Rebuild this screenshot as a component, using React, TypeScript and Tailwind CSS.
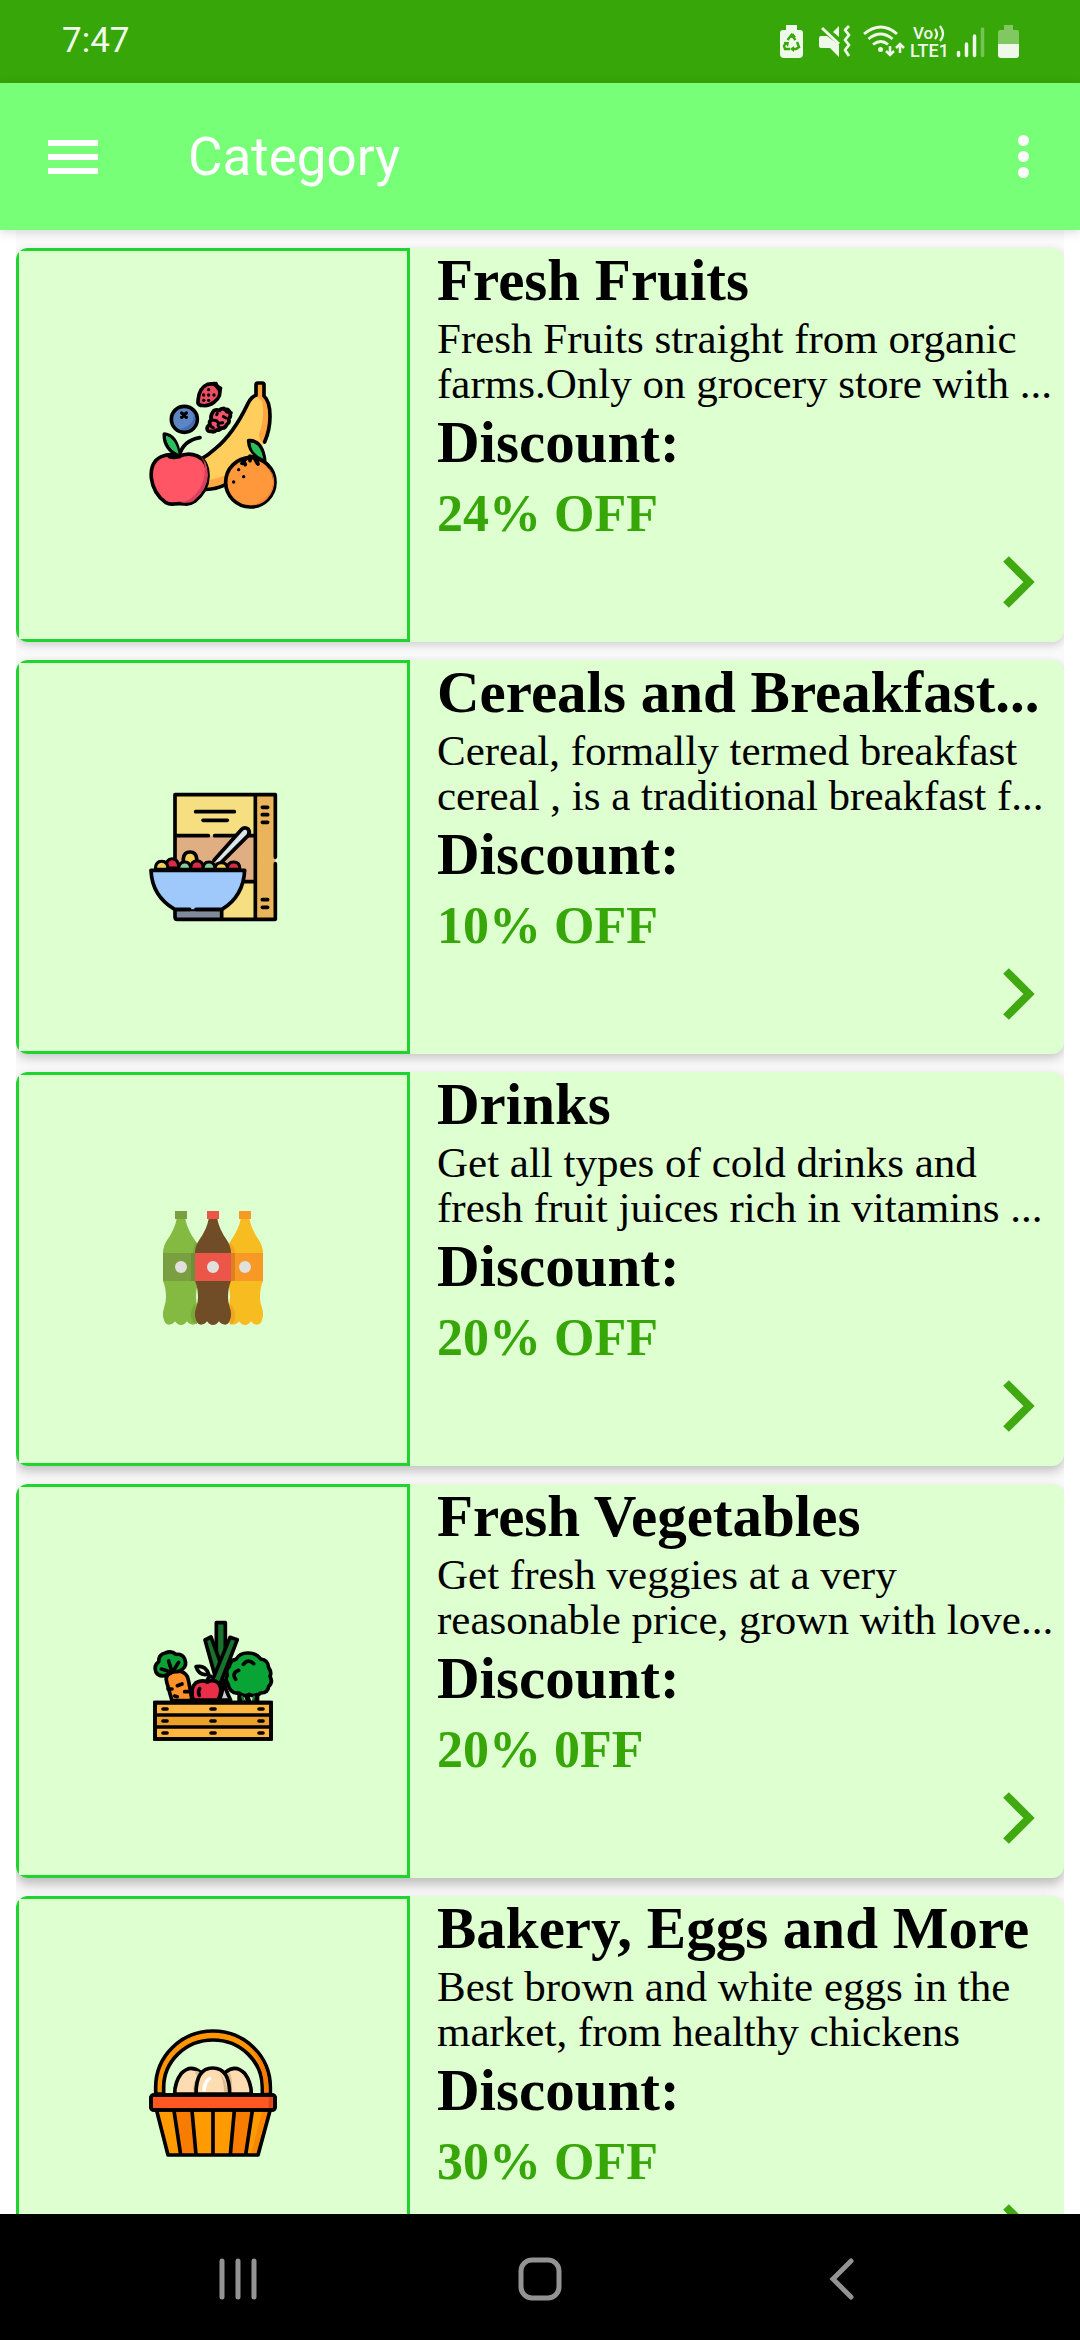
import React from "react";

const INK = "#000";

function FruitsIcon() {
  return (
    <svg viewBox="54 60 390 390" className="h-[130px] w-[130px]" fill="none" stroke={INK} strokeWidth="11" strokeLinecap="round" strokeLinejoin="round" aria-hidden="true">
      <path d="M378 71q0-2 4-2h16q4 0 4 3v34q16 12 20 50 2 48-18 92L300 380q-34 6-74 8L200 312Q262 268 304 214 328 182 354 130 362 112 378 106z" fill="#ffce5c" stroke="none" />
      <path d="M378 71h24v35q20 14 20 64-2 42-18 78-26-10-12-40 12-40 4-84-8-12-18-14z" fill="#ff9838" stroke="none" opacity=".75" />
      <path d="M404 246q16-36 16-78 0-44-18-60V74q0-5-5-5h-14q-5 0-5 5v32q-14 4-24 24-44 92-98 136-20 18-40 30M228 388q30 0 58-14" />
      <path d="M226 382q30 0 56-14v-20l-54 16z" fill="#ff9838" stroke="none" opacity=".7" />
      <path d="M148 290q-24-12-54 0-34 16-30 64 6 48 44 74 10 6 24 4 16-2 32 0 16 2 30-8 38-30 40-74 0-48-32-62-28-12-56 2-14 4-28 0z" fill="#ff5565" />
      <path d="M208 286q20 14 16 56-6 46-42 74-12 8-32 10 22 6 40-2 42-34 44-78-2-46-26-60z" fill="#d6425d" stroke="none" />
      <path d="M148 288q10-46 62-55M148 288q-46-20-45-66 38 4 45 66z" />
      <path d="M146 282q-38-20-38-54 30 8 38 54z" fill="#27c05c" stroke="none" />
      <circle cx="361" cy="367" r="74" fill="#ff983b" />
      <path d="M414 320q36 56-12 98-22 16-44 18 44 2 62-30 28-46-6-86z" fill="#ff8136" stroke="none" />
      <path d="M336 310q14-20 28-20 14 2 20 22M360 288v14M340 300l6 14M372 292l10 18M404 300q-46-16-48-58 40-2 48 58z" />
      <path d="M400 296q-38-16-38-48 30 4 38 48z" fill="#27c05c" stroke="none" />
      <g fill={INK} stroke="none"><circle cx="326" cy="329" r="5" /><circle cx="341" cy="350" r="5" /><circle cx="311" cy="366" r="5" /></g>
      <circle cx="163" cy="178" r="39" fill="#5c85c4" />
      <path d="M190 156q8 40-42 52 44 10 48-34z" fill="#426cad" stroke="none" />
      <path d="M155 159l14 13M169 159l-14 13" strokeWidth="10" />
      <path d="M232 73q28-6 36 14 8 22-16 40-18 14-40 9-10-2-8-14 2-38 28-49z" fill="#ed4d62" />
      <path d="M252 70l16 20M258 70l2 10 12 4-2 8" strokeWidth="10" />
      <g fill={INK} stroke="none"><circle cx="236" cy="89" r="5" /><circle cx="221" cy="105" r="5" /><circle cx="236" cy="105" r="5" /><circle cx="252" cy="105" r="5" /><circle cx="221" cy="121" r="5" /><circle cx="236" cy="121" r="5" /></g>
      <path d="M248 157q6-10 20-6 8-8 16-3 14-2 16 12 4 10-4 16 4 12-6 18-4 12-16 10-4 8-14 6-10 8-16 4-12 2-13-8 1-10 9-12-4-10 4-14-4-12 4-23z" fill="#f2526a" />
      <path d="M282 144l8 12 14 2M246 180l14 2 6 8 12-2M262 160l-2 4M280 170l8 4M242 198l8 6M264 196l4 8" strokeWidth="9" />
    </svg>
  );
}

function CerealIcon() {
  return (
    <svg viewBox="54 66 390 390" className="h-[130px] w-[130px]" fill="none" stroke={INK} strokeWidth="11" strokeLinecap="round" strokeLinejoin="round" aria-hidden="true">
      <g stroke="none">
        <path d="M135 74h241v374H135z" fill="#f5df80" />
        <path d="M135 197h241v138H135z" fill="#e0ae83" />
        <path d="M376 74h60v374h-60z" fill="#eab55a" />
      </g>
      <path d="M436 262V74H135v196M436 281v167H275M376 76v370M138 197h97M254 197h118M345 335h30" />
      <path d="M197 125h116M219 151h73M397 112h16M397 134h16M397 157h16M397 389h16M397 412h16" />
      <path d="M252 271l82-92q10-10 20-2 8 10 0 20l-86 86" fill="#dce5ea" stroke={INK} />
      <path d="M160 266q2-20 20-20t20 20v28h-40z" fill="#f3cf5a" />
      <g strokeWidth="9">
        <path d="M108 294q0-28 18-28 20 0 20 28z" fill="#d92c43" />
        <path d="M76 298q0-24 19-24t19 24z" fill="#f3cf5a" />
        <path d="M182 298q0-26 19-26t19 26z" fill="#d92c43" />
        <path d="M146 298q0-22 18-22t18 22z" fill="#86cf97" />
        <path d="M255 298q0-20 19-20t19 20z" fill="#f3cf5a" />
        <path d="M219 298q0-22 18-22t18 22z" fill="#86cf97" />
        <path d="M292 298q0-22 19-22t19 22z" fill="#d92c43" />
      </g>
      <path d="M135 418h140v30H142q-7 0-7-8z" fill="#7f8b9b" />
      <path d="M63 300h281q-4 80-68 118H134Q70 384 63 300z" fill="#9fc8fb" stroke="none" />
      <path d="M179 418h-45Q66 378 63 301h281q-4 78-68 117h-78" />
    </svg>
  );
}

const BOTTLE_TOP = "M140 87h26q6 32 28 62 13 19 13 40H99q0-21 13-40 22-30 28-62z";
const BOTTLE_BOTTOM = "M99 272h108q-9 22-9 50 0 16 5 28 8 24 1 40-4 14-15 14-11 0-18-10-7 11-18 11t-18-11q-7 10-18 10-11 0-15-14-7-16 1-40 5-12 5-28 0-28-9-50z";

function DrinksIcon() {
  const bottle = (x: number, body: string, label: string) => (
    <g transform={`translate(${x} 0)`}>
      <path d={BOTTLE_TOP} fill={body} />
      <path d={BOTTLE_BOTTOM} fill={body} />
      <path d="M135 63h36v24h-36zM99 189h108v84H99z" fill={label} />
      <circle cx="153" cy="231" r="18" fill="#e2e0dd" />
    </g>
  );
  return (
    <svg viewBox="54 42 390 390" className="h-[130px] w-[130px]" aria-hidden="true">
      {bottle(0, "#84ba41", "#7a9f40")}
      {bottle(192, "#f7bd20", "#f79924")}
      <path d="M183 189h14v84h-14z" fill="#6e8f39" />
      <path d="M301 189h14v84h-14z" fill="#dd8021" />
      <path d="M197 154q-8 20-8 35h12v-28zM183 370q4-20 12-28l6 60q-20-4-18-32z" fill="#76a83c" />
      <path d="M301 158q14 14 14 31h-14zM301 342q16 14 14 40-2 20-14 22z" fill="#f1a522" />
      {bottle(96, "#714d27", "#ec5649")}
    </svg>
  );
}

function VegetablesIcon() {
  return (
    <svg viewBox="54 48 390 390" className="h-[130px] w-[130px]" fill="none" stroke={INK} strokeWidth="11" strokeLinecap="round" strokeLinejoin="round" aria-hidden="true">
      <path d="M282 240q0 24-14 60h34q-18-34-20-60z" fill="#c9cbd3" />
      <path d="M259 68h27v120h-27z" fill="#19732f" />
      <path d="M225 120l18-9 34 92-20 32z" fill="#19732f" />
      <path d="M300 112l22 7-62 160-12-40z" fill="#19732f" />
      <path d="M294 252q-10-12-2-26-6-16 6-26 2-20 20-22 12-20 36-19 24-1 38 18 22 2 24 26 10 14 4 26 10 18-4 30-2 20-24 20-16 14-34 4-16 10-30-4-28 4-34-27z" fill="#08a536" />
      <path d="M340 193q14-18 31-2M326 211q-22 8-9 27" />
      <path d="M330 286v20M380 286v20M352 292l4 14" strokeWidth="16" />
      <path d="M336 290l8 16M372 290l-4 16" stroke="#19732f" strokeWidth="7" />
      <path d="M126 302l-16-56q-6-20 14-28 34-14 48 12 4 8 14 72z" fill="#ff9228" />
      <path d="M114 267h12M142 257l14-5M142 290l-8-2M164 275h10" />
      <path d="M110 225q-22 8-32-8-8-20 8-32 0-22 20-26 18-8 32 4 20-2 26 14 8 20-6 30-14 14-32 4-6 10-16 14z" fill="#0ba136" />
      <path d="M94 207q18 4 28 12M116 183l8 26M146 187l-14 22" />
      <path d="M190 300q-12-34 8-52 18-10 34-2 20-10 34 4 14 22-2 50z" fill="#ea2d48" />
      <path d="M209 266q-6 8-1 20M231 245q2-14 12-16M198 200q28-6 38 22-28 8-38-22z" />
      <path d="M75 308h348v109H75z" fill="#ffb540" />
      <path d="M80 350h338v28H80z" fill="#eba02b" stroke="none" />
      <path d="M78 345h342M78 381h342M99 327h12M243 327h12M387 327h12M99 363h12M243 363h12M387 363h12M99 399h12M243 399h12M387 399h12" />
      <path d="M75 308h348v109H75z" strokeLinejoin="miter" />
    </svg>
  );
}

function EggsIcon() {
  return (
    <svg viewBox="54 54 390 390" className="h-[130px] w-[130px]" fill="none" stroke={INK} strokeWidth="11" strokeLinecap="round" strokeLinejoin="round" aria-hidden="true">
      <path d="M77 252v-20a172 169 0 0 1 344 0v20h-24v-20a148 142 0 0 0-296 0v20z" fill="#ff9500" />
      <path d="M380 130q36 44 36 118h-14q2-80-38-132z" fill="#f57c00" stroke="none" />
      <path d="M134 252q0-36 20-62 28-28 56-4 20 24 20 66z" fill="#fddcb2" />
      <path d="M270 252q0-42 18-66 28-24 56 4 20 26 20 62z" fill="#fddcb2" />
      <path d="M196 190q8 8 0 20-8 16-6 38 14-36 22-60-8-6-16-6zM300 188q8 20 6 60-10-40-18-54z" fill="#deb98e" stroke="none" />
      <path d="M198 252q0-78 50-78 51 0 51 78z" fill="#fddcb2" />
      <path d="M268 188q22 20 24 58h-10q0-34-14-58z" fill="#deb98e" stroke="none" />
      <path d="M222 240q2-22 16-34" stroke="#fff" />
      <path d="M80 300l34 135h270l36-135z" fill="#ff9b00" stroke="none" />
      <path d="M132 300h54l13 135h-47zM315 300h54l-23 135h-46z" fill="#f77c00" stroke="none" />
      <path d="M398 300h22l-36 135h-22z" fill="#f57c00" stroke="none" opacity=".6" />
      <path d="M80 302l34 133h270l36-133M132 302l20 132M186 302l12 132M249 302v132M313 302l-12 132M367 302l-20 132" />
      <rect x="63" y="255" width="372" height="45" rx="8" fill="#ff5722" />
      <path d="M416 262h12v32h-12z" fill="#dc461a" stroke="none" />
      <rect x="63" y="255" width="372" height="45" rx="8" />
    </svg>
  );
}

type Category = {
  title: string;
  lines: [string, string];
  discount: string;
  icon: React.ReactNode;
  shadow: string;
};

const CATEGORIES: Category[] = [
  {
    title: "Fresh Fruits",
    lines: ["Fresh Fruits straight from organic", "farms.Only on grocery store with ..."],
    discount: "24% OFF",
    icon: <FruitsIcon />,
    shadow: "shadow-[0_3px_10px_rgba(0,0,0,0.18)]",
  },
  {
    title: "Cereals and Breakfast...",
    lines: ["Cereal, formally termed breakfast", "cereal , is a traditional breakfast f..."],
    discount: "10% OFF",
    icon: <CerealIcon />,
    shadow: "shadow-[0_4px_11px_rgba(0,0,0,0.21)]",
  },
  {
    title: "Drinks",
    lines: ["Get all types of cold drinks and", "fresh fruit juices rich in vitamins ..."],
    discount: "20% OFF",
    icon: <DrinksIcon />,
    shadow: "shadow-[0_5px_12px_rgba(0,0,0,0.24)]",
  },
  {
    title: "Fresh Vegetables",
    lines: ["Get fresh veggies at a very", "reasonable price, grown with love..."],
    discount: "20% 0FF",
    icon: <VegetablesIcon />,
    shadow: "shadow-[0_6px_12px_rgba(0,0,0,0.26)]",
  },
  {
    title: "Bakery, Eggs and More",
    lines: ["Best brown and white eggs in the", "market, from healthy chickens"],
    discount: "30% OFF",
    icon: <EggsIcon />,
    shadow: "shadow-[0_6px_12px_rgba(0,0,0,0.26)]",
  },
];

function CategoryCard({ item }: { item: Category }) {
  return (
    <li className={`flex shrink-0 overflow-hidden rounded-xl bg-[#deffd0] ${item.shadow}`}>
      <div className="flex aspect-square w-[394px] shrink-0 items-center justify-center border-[3px] border-[#1fd42f]">
        {item.icon}
      </div>
      <div className="flex min-w-0 flex-1 flex-col whitespace-nowrap pl-[27px] text-black">
        <h2 className="text-[59px] leading-[64px] font-bold">{item.title}</h2>
        <p className="mt-1 text-[43px] leading-[45px]">
          {item.lines[0]}
          <br />
          {item.lines[1]}
        </p>
        <p className="mt-1 text-[59px] leading-[64px] font-bold">Discount:</p>
        <p className="mt-2 text-[52px] leading-[64px] font-bold text-[#37a608]">{item.discount}</p>
        <button type="button" aria-label={`Open ${item.title}`} className="mt-2 mr-7 self-end">
          <svg viewBox="0 0 34 56" className="h-14 w-[34px]" fill="none" stroke="#40a810" strokeWidth="8" aria-hidden="true">
            <path d="M4 5l23 23L4 51" />
          </svg>
        </button>
      </div>
    </li>
  );
}

function StatusBar() {
  return (
    <div className="flex h-[83px] shrink-0 items-center bg-[#37a608] pr-[60px] pb-0.5 pl-[62px] text-[#eff9ea]">
      <span className="text-[35px] leading-10">7:47</span>
      <svg viewBox="780 20 240 40" className="ml-auto h-10 w-60" fill="none" stroke="currentColor" role="img" aria-label="Battery protection, vibrate, Wi-Fi, VoLTE, signal, battery">
        <path d="M786 24h11v5h3q3 0 3 3v21q0 4-4 4h-15q-4 0-4-4V32q0-3 3-3h3z" fill="currentColor" stroke="none" />
        <path d="M787.500 39l4-5 4 5M797 41l2 5-3 2h-3M790 48h-5l-1-3 2-4" stroke="#37a608" strokeWidth="2.400" />
        <path d="M790 37l3-5 3 4zM794 45v6l-4-3zM784 41h5l-1 5z" fill="#37a608" stroke="none" />
        <path d="M821 35h6l12 9v12l-9-9h-9q-2 0-2-2v-8q0-2 2-2z" fill="currentColor" stroke="none" />
        <path d="M839 25v11l-6-5z" fill="currentColor" stroke="none" />
        <path d="M822 27l17 16" strokeWidth="3" />
        <path d="M849 25l-4 4 4 5-4 5 4 5-4 5 4 6" strokeWidth="2.800" strokeLinejoin="round" />
        <g strokeWidth="2.800">
          <path d="M864 33q17-14 33 0M868.500 38q12-10 24 0M873 43.500q8-6 15 0" />
          <path d="M890 45v9M886 50l4 4 4-4M900 52v-9M896 47l4-4 4 4" strokeWidth="2.500" />
        </g>
        <circle cx="880.500" cy="48.500" r="2.500" fill="currentColor" stroke="none" />
        <g fill="currentColor" stroke="none" className="font-medium" fontFamily="Roboto, sans-serif">
          <text x="913" y="38" fontSize="17">Vo</text>
          <text x="910" y="56" fontSize="18">LTE1</text>
        </g>
        <path d="M935 28q4 5 0 10M940 25q6 8 0 15" strokeWidth="2.200" />
        <g strokeWidth="3.500" strokeLinecap="round">
          <path d="M958.500 51.500v3M966.500 43v11.500M974.500 35v19.500" />
          <path d="M982.500 28v26.500" opacity=".35" />
        </g>
        <path d="M1004 24h9v5h4q2 0 2 2v12h-21V31q0-2 2-2h4z" fill="currentColor" stroke="none" opacity=".4" />
        <path d="M998 43h21v11q0 3-3 3h-15q-3 0-3-3z" fill="currentColor" stroke="none" />
      </svg>
    </div>
  );
}

export default function App() {
  return (
    <div className="flex h-screen flex-col overflow-hidden bg-white font-['Roboto',sans-serif]">
      <StatusBar />
      <header className="z-10 flex h-[147px] shrink-0 items-center bg-[#77ff77] pr-[41px] pl-12 text-white shadow-[0_2px_10px_rgba(0,0,0,0.16)]">
        <button type="button" aria-label="Open menu" className="flex w-[50px] flex-col gap-2">
          <span className="h-1.5 bg-white" />
          <span className="h-1.5 bg-white" />
          <span className="h-1.5 bg-white" />
        </button>
        <h1 className="ml-[90px] text-[53px] leading-[60px] font-normal">Category</h1>
        <button type="button" aria-label="More options" className="ml-auto flex w-8 flex-col items-center gap-[5px]">
          <span className="size-[11px] rounded-full bg-white" />
          <span className="size-[11px] rounded-full bg-white" />
          <span className="size-[11px] rounded-full bg-white" />
        </button>
      </header>
      <main className="min-h-0 flex-1 overflow-hidden px-4">
        <ul className="flex h-full flex-col gap-[18px] overflow-hidden bg-[#fafafa] pt-[18px] font-['Liberation_Serif',serif]">
          {CATEGORIES.map((item) => (
            <CategoryCard key={item.title} item={item} />
          ))}
        </ul>
      </main>
      <nav aria-label="System" className="grid h-[126px] shrink-0 grid-cols-[1fr_190px_1fr] items-center bg-black pt-1 text-[#939393]">
        <button type="button" aria-label="Recent apps" className="mr-[188px] justify-self-end">
          <svg viewBox="0 0 38 42" className="h-[42px] w-[38px]" fill="none" stroke="currentColor" strokeWidth="5" strokeLinecap="round">
            <path d="M3 3v36M19 3v36M35 3v36" />
          </svg>
        </button>
        <button type="button" aria-label="Home" className="justify-self-center">
          <svg viewBox="0 0 44 44" className="size-11" fill="none" stroke="currentColor" strokeWidth="5">
            <rect x="3" y="3" width="38" height="38" rx="11" />
          </svg>
        </button>
        <button type="button" aria-label="Back" className="ml-[194px] justify-self-start">
          <svg viewBox="0 0 26 42" className="h-[42px] w-[26px]" fill="none" stroke="currentColor" strokeWidth="5" strokeLinecap="round">
            <path d="M22 3L4 21l18 18" />
          </svg>
        </button>
      </nav>
    </div>
  );
}
